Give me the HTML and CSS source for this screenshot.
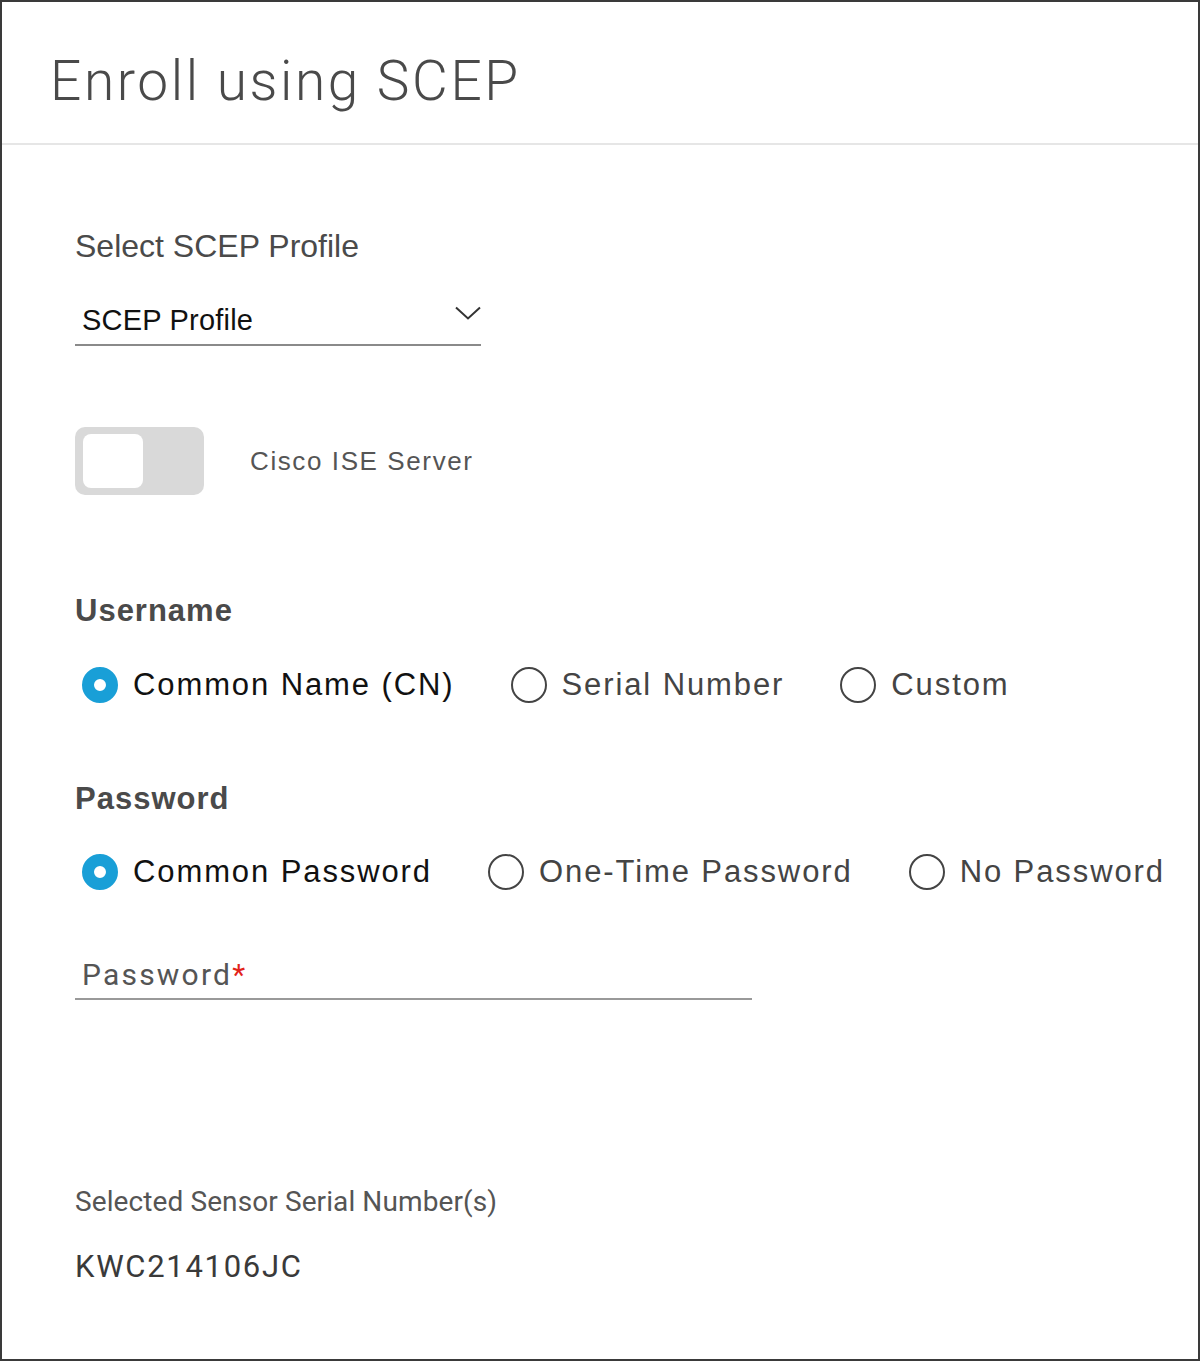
FILE: index.html
```html
<!DOCTYPE html>
<html lang="en">
<head>
<meta charset="utf-8">
<title>Enroll using SCEP</title>
<link rel="stylesheet" href="styles.css">
</head>
<body>
<div class="page">
  <header class="header">
    <h1 class="title">Enroll using SCEP</h1>
  </header>
  <main class="main">
    <div class="field-label">Select SCEP Profile</div>
    <div class="select">
      <span class="select-value">SCEP Profile</span>
      <svg class="chevron" width="26" height="14" viewBox="0 0 26 14"><polyline points="1,1.5 13,12.5 25,1.5" fill="none" stroke="#333" stroke-width="2"/></svg>
    </div>
    <div class="toggle-row">
      <div class="toggle"><div class="knob"></div></div>
      <span class="toggle-label">Cisco ISE Server</span>
    </div>
    <div class="section-title">Username</div>
    <div class="radio-group">
      <div class="radio checked"><span class="dot"></span><span class="radio-text">Common Name (CN)</span></div>
      <div class="radio"><span class="dot"></span><span class="radio-text">Serial Number</span></div>
      <div class="radio"><span class="dot"></span><span class="radio-text">Custom</span></div>
    </div>
    <div class="section-title pw-title">Password</div>
    <div class="radio-group pw-group">
      <div class="radio checked"><span class="dot"></span><span class="radio-text">Common Password</span></div>
      <div class="radio"><span class="dot"></span><span class="radio-text">One-Time Password</span></div>
      <div class="radio"><span class="dot"></span><span class="radio-text">No Password</span></div>
    </div>
    <div class="input">
      <span class="placeholder">Password<span class="req">*</span></span>
    </div>
    <div class="serial-label">Selected Sensor Serial Number(s)</div>
    <div class="serial-value">KWC214106JC</div>
  </main>
</div>
</body>
</html>
```
FILE: styles.css
```css
html, body {
  margin: 0;
  padding: 0;
  background: #fff;
}

.page {
  box-sizing: border-box;
  width: 1200px;
  height: 1361px;
  border: 2px solid #3a3a3a;
  background: #fff;
  font-family: "Liberation Sans", Arial, sans-serif;
}

.header {
  box-sizing: border-box;
  height: 143px;
  padding: 51px 0 0 48px;
  border-bottom: 2px solid #e6e6e6;
}

.title {
  margin: 0;
  font-family: Roboto, "Liberation Sans", sans-serif;
  font-weight: 300;
  font-size: 55px;
  line-height: 56px;
  letter-spacing: 2.6px;
  color: #4a4a4a;
}

.main {
  padding-left: 73px;
}

.field-label {
  margin-top: 81px;
  font-size: 32px;
  line-height: 40px;
  color: #4a4a4a;
}

.select {
  margin-top: 36px;
  width: 406px;
  display: flex;
  justify-content: space-between;
  align-items: flex-start;
  padding-bottom: 6px;
  border-bottom: 2px solid #8a8a8a;
}

.select-value {
  padding-left: 7px;
  font-size: 29px;
  line-height: 36px;
  letter-spacing: 0.2px;
  color: #111;
}

.chevron {
  margin-top: 4px;
  display: block;
}

.toggle-row {
  margin-top: 81px;
  display: flex;
  align-items: center;
  gap: 46px;
}

.toggle {
  box-sizing: border-box;
  width: 129px;
  height: 68px;
  padding: 7px 8px;
  border-radius: 10px;
  background: #d9d9d9;
}

.knob {
  width: 60px;
  height: 54px;
  border-radius: 8px;
  background: #fff;
}

.toggle-label {
  font-size: 26px;
  line-height: 34px;
  letter-spacing: 1.6px;
  color: #555;
}

.section-title {
  margin-top: 98px;
  font-weight: bold;
  font-size: 31px;
  line-height: 36px;
  letter-spacing: 1px;
  color: #4a4a4a;
}

.pw-title {
  margin-top: 78px;
}

.radio-group {
  margin-top: 38px;
  margin-left: 7px;
  display: flex;
  align-items: center;
  gap: 56px;
}

.pw-group {
  margin-top: 37px;
}

.radio {
  display: flex;
  align-items: center;
  gap: 15px;
  height: 36px;
}

.dot {
  box-sizing: border-box;
  width: 36px;
  height: 36px;
  border-radius: 50%;
  border: 2px solid #444;
  background: #fff;
  flex: none;
}

.radio.checked .dot {
  border: 12px solid #199fd7;
}

.radio-text {
  font-size: 31px;
  line-height: 36px;
  letter-spacing: 1.9px;
  color: #444;
}

.radio.checked .radio-text {
  color: #111;
}

.input {
  margin-top: 67px;
  width: 677px;
  padding-bottom: 5px;
  border-bottom: 2px solid #999;
}

.placeholder {
  display: block;
  padding-left: 7px;
  font-family: Roboto, "Liberation Sans", sans-serif;
  font-size: 30px;
  line-height: 36px;
  letter-spacing: 2.2px;
  color: #555;
}

.req {
  color: #e2231a;
}

.serial-label {
  margin-top: 184px;
  font-family: Roboto, "Liberation Sans", sans-serif;
  font-size: 28px;
  line-height: 36px;
  letter-spacing: 0.1px;
  color: #555;
}

.serial-value {
  margin-top: 27px;
  font-family: Roboto, "Liberation Sans", sans-serif;
  font-size: 31px;
  line-height: 40px;
  letter-spacing: 1.7px;
  color: #3a3a3a;
}
```
